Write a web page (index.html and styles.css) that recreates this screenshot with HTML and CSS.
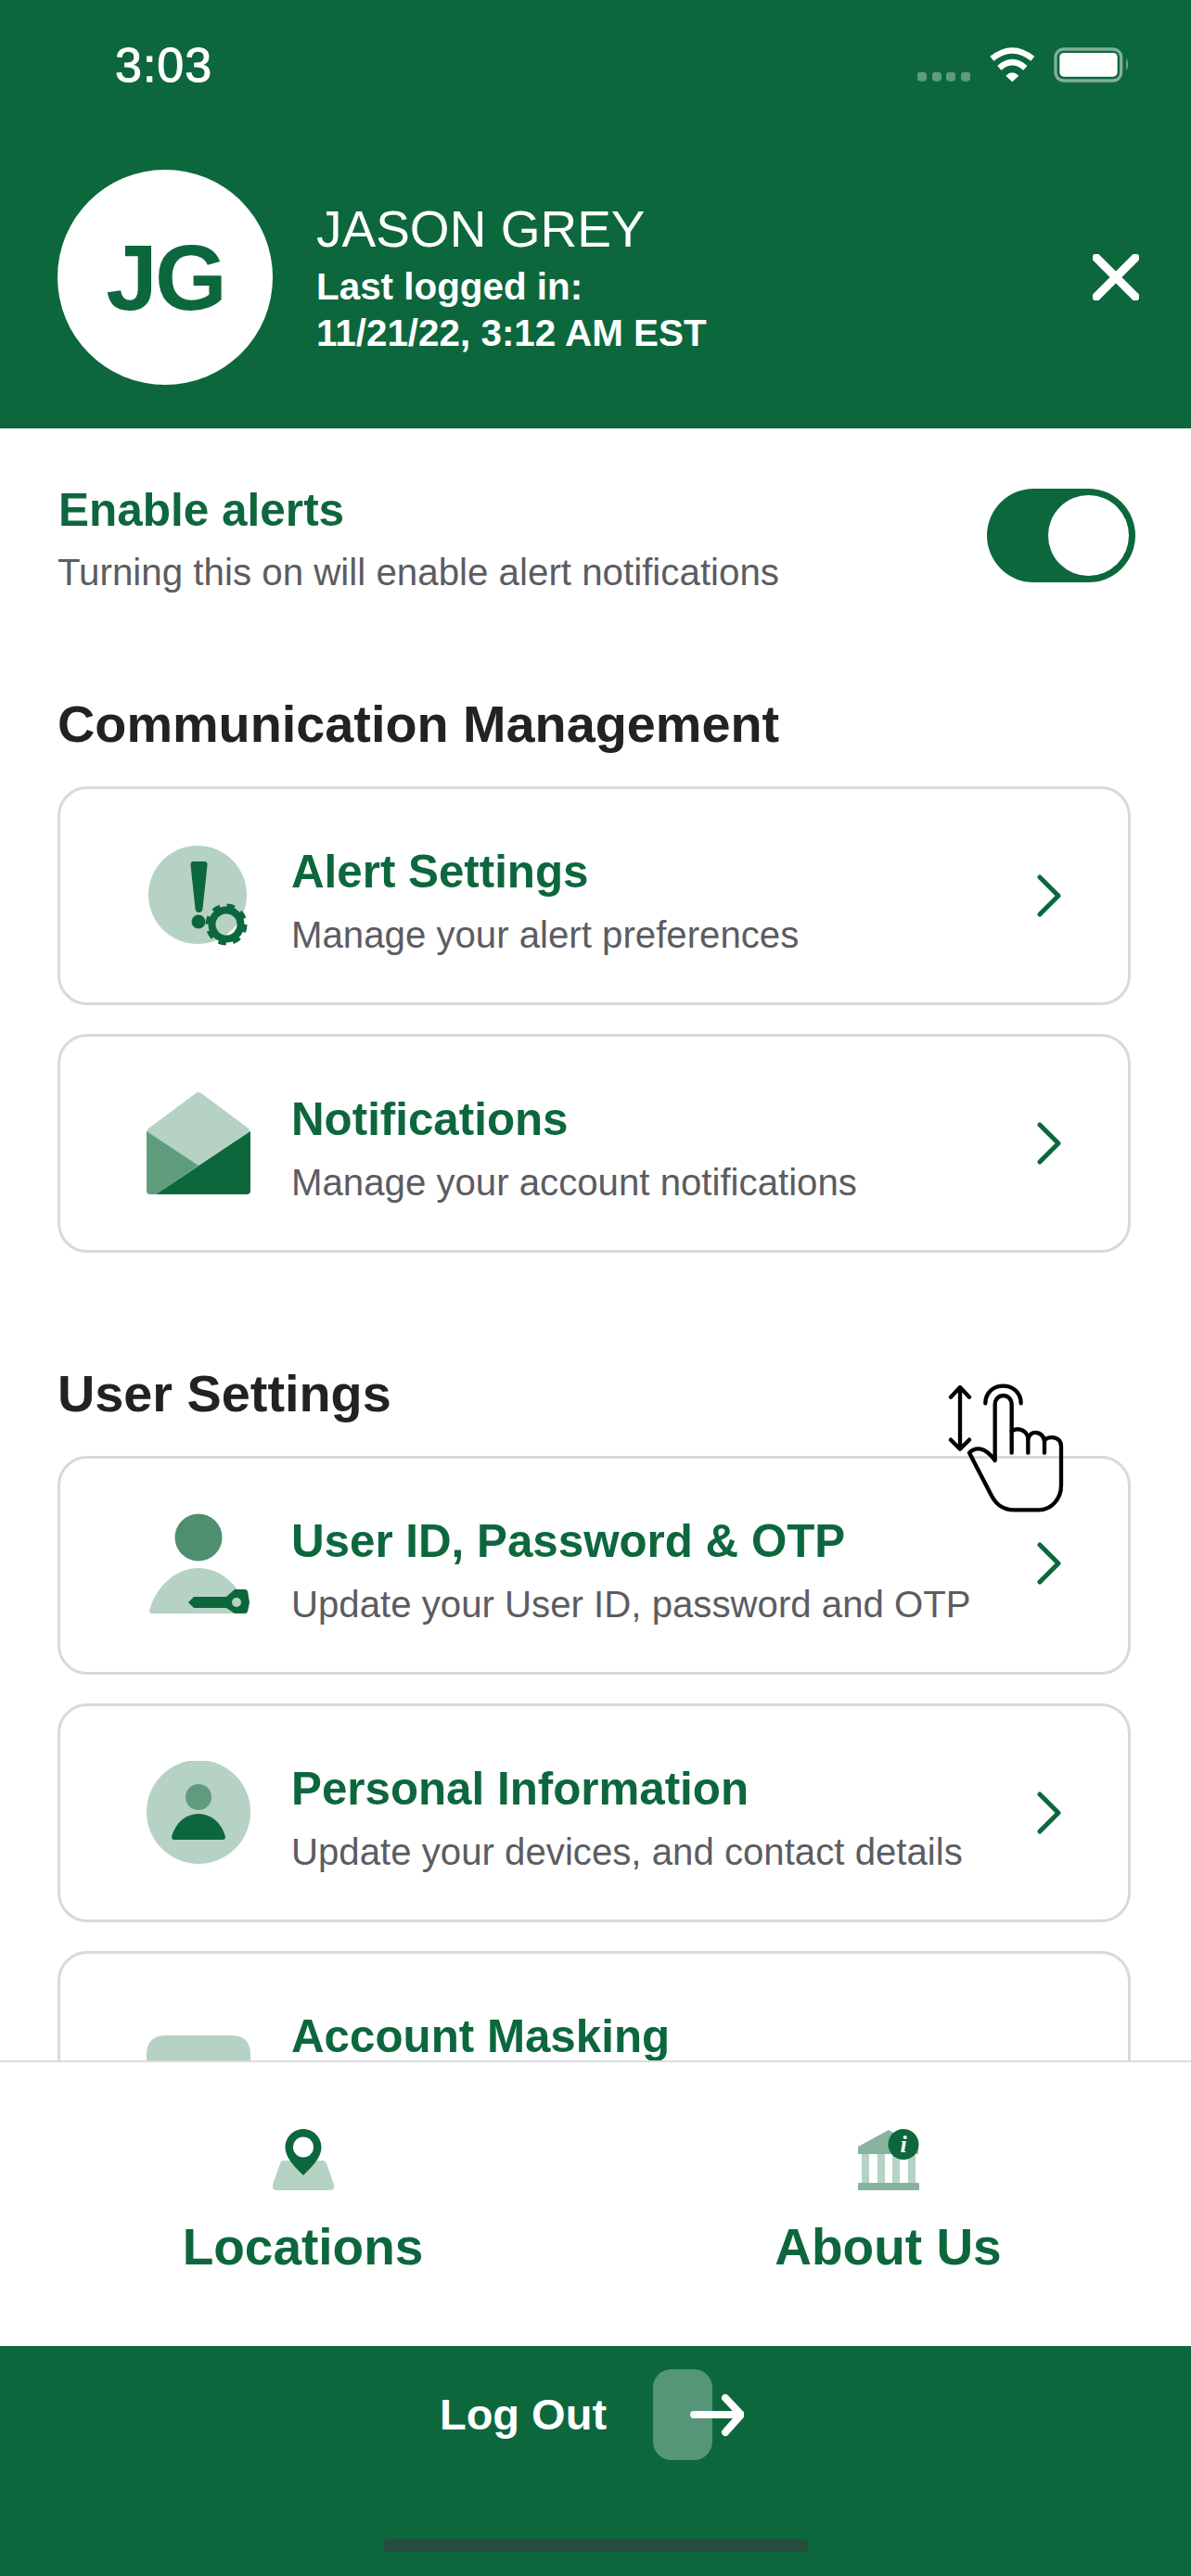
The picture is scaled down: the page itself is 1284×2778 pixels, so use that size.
FILE: index.html
```html
<!DOCTYPE html>
<html lang="en">
<head>
<meta charset="utf-8">
<title>Profile menu</title>
<link rel="stylesheet" href="styles.css">
</head>
<body>
<div class="app">
  <header class="header">
    <div class="status">
      <span class="time">3:03</span>
      <svg class="status-icons" viewBox="0 0 810 210" aria-hidden="true">
        <g fill="#5f9c7d">
          <rect x="57" y="143" width="30" height="30" rx="10"/>
          <rect x="105" y="143" width="30" height="30" rx="10"/>
          <rect x="150" y="143" width="30" height="30" rx="10"/>
          <rect x="198" y="143" width="30" height="30" rx="10"/>
        </g>
        <g fill="none" stroke="#fff" stroke-width="19">
          <path d="M298 100Q364 47 430 100"/>
          <path d="M322 130Q364 93 406 130"/>
        </g>
        <path d="M343 155Q364 135 385 155L364 175Z" fill="#fff"/>
        <rect x="504" y="69" width="212" height="102" rx="26" fill="none" stroke="#7fb09a" stroke-width="10"/>
        <rect x="517" y="81" width="187" height="77" rx="14" fill="#fff"/>
        <path d="M733 98Q744 118 733 138Z" fill="#7fb09a"/>
      </svg>
    </div>
    <div class="profile">
      <div class="avatar">JG</div>
      <div class="who">
        <div class="name">JASON GREY</div>
        <div class="login">Last logged in:</div>
        <div class="login">11/21/22, 3:12 AM EST</div>
      </div>
      <svg class="close" viewBox="0 0 50 50" aria-hidden="true">
        <path d="M4 4L46 46M46 4L4 46" fill="none" stroke="#fff" stroke-width="9" stroke-linecap="round"/>
      </svg>
    </div>
  </header>

  <main class="main">
    <section class="alerts">
      <div>
        <div class="alerts-title">Enable alerts</div>
        <div class="alerts-sub">Turning this on will enable alert notifications</div>
      </div>
      <div class="toggle"><span class="knob"></span></div>
    </section>

    <section class="section section-comm">
      <h2 class="heading">Communication Management</h2>
      <div class="cards">
        <a class="card">
          <svg class="icon" viewBox="0 0 112 112" aria-hidden="true">
            <circle cx="55" cy="55" r="53" fill="#b6d2c4"/>
            <path d="M51 19H62Q66 19 65.500 23L60.500 70Q60 74 56.500 74Q53 74 52.500 70L47.500 23Q47 19 51 19Z" fill="#0d673d"/>
            <circle cx="56" cy="84" r="7.500" fill="#0d673d"/>
            <circle cx="86" cy="87" r="15.500" fill="none" stroke="#0d673d" stroke-width="8"/>
            <circle cx="86" cy="87" r="19" fill="none" stroke="#0d673d" stroke-width="7" stroke-dasharray="7.900 7.020"/>
          </svg>
          <div class="card-text">
            <div class="card-title">Alert Settings</div>
            <div class="card-sub">Manage your alert preferences</div>
          </div>
          <svg class="chevron" viewBox="0 0 26 46" aria-hidden="true"><path d="M3 3L23 23L3 43" fill="none" stroke="#0d673d" stroke-width="5" stroke-linecap="round" stroke-linejoin="round"/></svg>
        </a>
        <a class="card">
          <svg class="icon" viewBox="0 0 112 112" aria-hidden="true">
            <path d="M53 2Q56 0 59 2L110 40Q112 42 112 45L56 81L0 45Q0 42 2 40Z" fill="#b6d2c4"/>
            <path d="M0 43L56 80L10 111H4Q0 111 0 107Z" fill="#5f9c7d"/>
            <path d="M112 43V107Q112 111 108 111H10Z" fill="#0d673d"/>
          </svg>
          <div class="card-text">
            <div class="card-title">Notifications</div>
            <div class="card-sub">Manage your account notifications</div>
          </div>
          <svg class="chevron" viewBox="0 0 26 46" aria-hidden="true"><path d="M3 3L23 23L3 43" fill="none" stroke="#0d673d" stroke-width="5" stroke-linecap="round" stroke-linejoin="round"/></svg>
        </a>
      </div>
    </section>

    <section class="section section-user">
      <h2 class="heading">User Settings</h2>
      <div class="cards">
        <a class="card">
          <svg class="icon" viewBox="0 0 112 112" aria-hidden="true">
            <circle cx="56" cy="26" r="25.500" fill="#4f8f6f"/>
            <path d="M6 108Q2 108 3.500 103C11 78 32 59 56 59C80 59 101 78 108 103V108Z" fill="#b6d2c4"/>
            <path d="M45 96L51 90H86L95 82H107L109 84L111 96L109 106L107 108H95L86 102H51Z" fill="#0d673d"/>
            <circle cx="97" cy="96" r="5" fill="#b6d2c4"/>
          </svg>
          <div class="card-text">
            <div class="card-title">User ID, Password &amp; OTP</div>
            <div class="card-sub">Update your User ID, password and OTP</div>
          </div>
          <svg class="chevron chevron-high" viewBox="0 0 26 46" aria-hidden="true"><path d="M3 3L23 23L3 43" fill="none" stroke="#0d673d" stroke-width="5" stroke-linecap="round" stroke-linejoin="round"/></svg>
        </a>
        <a class="card">
          <svg class="icon" viewBox="0 0 112 112" aria-hidden="true">
            <circle cx="56" cy="55" r="56" fill="#b6d2c4"/>
            <circle cx="56" cy="39" r="14" fill="#5f9c7d"/>
            <path d="M30 85Q26 85 27.500 80C32 66 43 57 56 57C69 57 80 66 84.500 80Q86 85 82 85Z" fill="#0d673d"/>
          </svg>
          <div class="card-text">
            <div class="card-title">Personal Information</div>
            <div class="card-sub">Update your devices, and contact details</div>
          </div>
          <svg class="chevron" viewBox="0 0 26 46" aria-hidden="true"><path d="M3 3L23 23L3 43" fill="none" stroke="#0d673d" stroke-width="5" stroke-linecap="round" stroke-linejoin="round"/></svg>
        </a>
        <a class="card">
          <svg class="icon" viewBox="0 0 112 112" aria-hidden="true">
            <path d="M0 112V50Q0 29 21 29H91Q112 29 112 50V112Z" fill="#b6d2c4"/>
          </svg>
          <div class="card-text">
            <div class="card-title">Account Masking</div>
            <div class="card-sub">&nbsp;</div>
          </div>
        </a>
      </div>
    </section>
  </main>

  <nav class="nav">
    <a class="nav-item">
      <svg class="nav-icon" viewBox="0 0 66 66" aria-hidden="true">
        <path d="M12 34H54Q57 34 58 37L66 60Q67 66 62 66H4Q-1 66 0 60L8 37Q9 34 12 34Z" fill="#b6d2c4"/>
        <path d="M33 0C44 0 52.500 9 52.500 20C52.500 31 41 42 33 50C25 42 13.500 31 13.500 20C13.500 9 22 0 33 0Z" fill="#0d673d"/>
        <circle cx="33" cy="19.500" r="11" fill="#fff"/>
      </svg>
      <span class="nav-label">Locations</span>
    </a>
    <a class="nav-item">
      <svg class="nav-icon" viewBox="0 0 66 66" aria-hidden="true">
        <path d="M33 1L65 19V27H0V19Z" fill="#88b39d"/>
        <g fill="#b6d2c4">
          <rect x="4" y="27" width="8" height="31"/>
          <rect x="21" y="27" width="8" height="31"/>
          <rect x="37" y="27" width="8" height="31"/>
          <rect x="54" y="27" width="8" height="31"/>
        </g>
        <rect y="58" width="66" height="8" rx="1" fill="#88b39d"/>
        <circle cx="49" cy="16.500" r="16.500" fill="#0d673d"/>
        <text class="info-i" x="49" y="25" text-anchor="middle">i</text>
      </svg>
      <span class="nav-label">About Us</span>
    </a>
  </nav>

  <footer class="footer">
    <div class="logout">
      <span class="logout-label">Log Out</span>
      <svg class="logout-icon" viewBox="0 0 98 98" aria-hidden="true">
        <rect x="0" y="0" width="64" height="98" rx="20" fill="#569678"/>
        <path d="M44 49H94M78 31L95 49L78 68" fill="none" stroke="#fff" stroke-width="8" stroke-linecap="round" stroke-linejoin="round"/>
      </svg>
    </div>
    <div class="home-bar"></div>
  </footer>

  <svg class="gesture" viewBox="0 0 720 600" aria-hidden="true">
    <g fill="none" stroke="#000" stroke-width="13" stroke-linecap="round" stroke-linejoin="round">
      <path d="M165 110V305M135 140L165 108L195 140M135 278L165 308L195 278"/>
      <path d="M247 160C247 85 362 85 362 160"/>
      <path d="M332 320V165C332 125 278 125 278 165V345C245 300 215 300 195 320L265 455C280 485 300 505 340 505H420C460 505 492 470 492 425V300C492 265 450 265 438 280"/>
      <path d="M332 250C345 240 375 240 385 270V320"/>
      <path d="M385 275C395 245 430 250 438 280V320"/>
    </g>
  </svg>
</div>
</body>
</html>
```

FILE: styles.css
```css
* {
  box-sizing: border-box;
}

html,
body {
  margin: 0;
  padding: 0;
}

body {
  font-family: "Liberation Sans", Arial, sans-serif;
  background: #fff;
}

.app {
  position: relative;
  width: 1284px;
  height: 2778px;
  display: flex;
  flex-direction: column;
  overflow: hidden;
}

.header {
  flex: none;
  height: 462px;
  background: #0d673d;
  color: #fff;
  padding-top: 30px;
}

.status {
  display: flex;
  justify-content: space-between;
  align-items: center;
  height: 70px;
  padding: 0 44px 0 124px;
}

.time {
  font-size: 52px;
  line-height: 70px;
  letter-spacing: 1px;
  margin-top: 10px;
  -webkit-text-stroke: 1px #fff;
}

.status-icons {
  width: 270px;
  height: 70px;
}

.profile {
  display: flex;
  align-items: center;
  margin-top: 83px;
  padding: 0 56px 0 62px;
}

.avatar {
  width: 232px;
  height: 232px;
  border-radius: 50%;
  background: #fff;
  color: #0d673d;
  font-size: 100px;
  font-weight: 700;
  letter-spacing: -3px;
  display: flex;
  align-items: center;
  justify-content: center;
}

.who {
  margin-left: 47px;
}

.name {
  font-size: 55px;
  line-height: 66px;
  margin-bottom: 4px;
}

.login {
  font-size: 40.4px;
  font-weight: 700;
  line-height: 50px;
}

.close {
  width: 50px;
  height: 50px;
  margin-left: auto;
}

.main {
  flex: 1;
  min-height: 0;
  overflow: hidden;
}

.alerts {
  display: flex;
  justify-content: space-between;
  align-items: flex-start;
  padding: 58px 60px 0 62px;
}

.alerts-title {
  font-size: 49.5px;
  font-weight: 700;
  line-height: 60px;
  margin-left: 1px;
  color: #0d673d;
}

.alerts-sub {
  font-size: 40.3px;
  line-height: 56px;
  margin-top: 10px;
  color: #5c5c62;
}

.toggle {
  width: 160px;
  height: 101px;
  margin-top: 7px;
  padding: 7px;
  border-radius: 51px;
  background: #0d673d;
  display: flex;
  justify-content: flex-end;
}

.knob {
  width: 87px;
  height: 87px;
  border-radius: 50%;
  background: #fff;
}

.section {
  padding: 0 65px 0 62px;
}

.section-comm {
  margin-top: 102px;
}

.section-user {
  margin-top: 119px;
}

.heading {
  margin: 0 0 34px;
  font-size: 55.8px;
  line-height: 66px;
  font-weight: 700;
  color: #222;
}

.cards {
  display: flex;
  flex-direction: column;
  gap: 31px;
}

.card {
  flex: none;
  height: 236px;
  border: 3px solid #d9d9d9;
  border-radius: 32px;
  background: #fff;
  display: flex;
  align-items: center;
  padding: 0 72px 0 93px;
}

.icon {
  flex: none;
  width: 112px;
  height: 112px;
}

.card-text {
  margin-left: 44px;
  padding-top: 14px;
}

.card-title {
  font-size: 49.3px;
  font-weight: 700;
  line-height: 60px;
  color: #0d673d;
}

.card-sub {
  font-size: 40.2px;
  line-height: 56px;
  margin-top: 11px;
  color: #5c5c62;
}

.chevron {
  flex: none;
  width: 26px;
  height: 46px;
  margin-left: auto;
}

.chevron-high {
  margin-bottom: 4px;
}

.nav {
  flex: none;
  height: 308px;
  border-top: 2px solid #dcdcdc;
  background: #fff;
  display: grid;
  grid-template-columns: 1fr 1fr;
  padding: 0 11px;
  position: relative;
}

.nav-item {
  display: flex;
  flex-direction: column;
  align-items: center;
  padding-top: 72px;
}

.nav-icon {
  width: 66px;
  height: 66px;
}

.nav-label {
  margin-top: 28px;
  font-size: 55px;
  line-height: 66px;
  font-weight: 700;
  color: #0d673d;
}

.info-i {
  font-family: "Liberation Serif", serif;
  font-size: 26px;
  font-style: italic;
  font-weight: 700;
  fill: #fff;
}

.footer {
  flex: none;
  height: 248px;
  background: #0d673d;
  color: #fff;
  position: relative;
  display: flex;
  flex-direction: column;
  align-items: center;
}

.logout {
  display: flex;
  align-items: center;
  margin-top: 25px;
  margin-left: -8px;
  gap: 50px;
}

.logout-label {
  font-size: 47px;
  font-weight: 700;
  line-height: 98px;
}

.logout-icon {
  width: 98px;
  height: 98px;
}

.home-bar {
  width: 459px;
  height: 14px;
  margin-top: 85px;
  border-radius: 7px;
  background: #264d3d;
}

.gesture {
  position: absolute;
  left: 980px;
  top: 1460px;
  width: 240px;
  height: 200px;
}
```
